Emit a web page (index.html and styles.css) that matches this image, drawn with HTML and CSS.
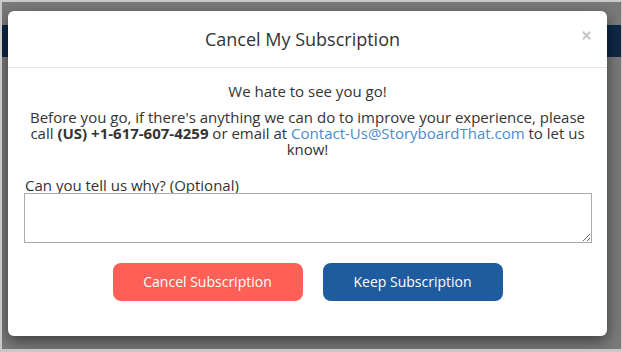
FILE: index.html
```html
<!DOCTYPE html>
<html>
<head>
<meta charset="utf-8">
<link rel="stylesheet" href="styles.css">
</head>
<body>
<div class="screen">
  <div class="page">
    <div class="page-top"></div>
    <div class="navbar"></div>
  </div>
  <div class="modal">
    <div class="modal-header">
      <h4 class="modal-title">Cancel My Subscription</h4>
      <button class="close" type="button" aria-label="Close">
        <svg width="9" height="9" viewBox="0 0 9 9"><path d="M0.8 0.8 L8.2 8.2 M8.2 0.8 L0.8 8.2" stroke="#c6c6c6" stroke-width="2" fill="none"/></svg>
      </button>
    </div>
    <div class="modal-body">
      <p class="lead">We hate to see you go!</p>
      <p class="info">Before you go, if there's anything we can do to improve your experience, please call <b>(US) +1-617-607-4259</b> or email at <a href="#">Contact-Us@StoryboardThat.com</a> to let us know!</p>
      <label class="why" for="why">Can you tell us why? (Optional)</label>
      <textarea id="why" class="why-box"></textarea>
      <div class="actions">
        <button class="btn btn-cancel" type="button">Cancel Subscription</button>
        <button class="btn btn-keep" type="button">Keep Subscription</button>
      </div>
    </div>
  </div>
</div>
</body>
</html>
```
FILE: styles.css
```css
* { box-sizing: border-box; }
html, body { margin: 0; padding: 0; }
body {
  width: 622px;
  height: 352px;
  overflow: hidden;
  font-family: "Open Sans", "Liberation Sans", sans-serif;
  color: #333;
}
.screen {
  position: relative;
  width: 622px;
  height: 352px;
  border-style: solid;
  border-color: #c9c9c9;
  border-width: 2px 1px 3px 2px;
  background: #7a7a7a;
  overflow: hidden;
}
.page { display: flex; flex-direction: column; }
.page-top { height: 23px; }
.navbar { height: 32px; background: #0d2846; }

.modal {
  position: absolute;
  left: 6px;
  top: 9px;
  width: 599px;
  height: 325px;
  background: #fff;
  border-radius: 6px;
  box-shadow: 0 5px 15px rgba(0,0,0,.5);
  display: flex;
  flex-direction: column;
}
.modal-header {
  position: relative;
  padding: 15px;
  border-bottom: 1px solid #e5e5e5;
}
.modal-title {
  margin: 0;
  font-size: 18px;
  font-weight: normal;
  line-height: 26px;
  text-align: center;
  color: #333;
  padding-right: 10px;
}
.close {
  position: absolute;
  right: 16px;
  top: 20px;
  padding: 0;
  border: 0;
  background: none;
  width: 9px;
  height: 9px;
  display: flex;
}
.modal-body {
  padding: 15px 15px 15px 15px;
  font-size: 15px;
  line-height: 16px;
  display: flex;
  flex-direction: column;
}
.lead {
  margin: 0;
  text-align: center;
}
.info {
  margin: 10px 0 0;
  text-align: center;
}
.info b { font-weight: bold; }
.info a { color: #4a8bd0; text-decoration: none; }
.why {
  margin-top: 21px;
  padding-left: 2px;
  line-height: 15px;
  display: block;
}
.why-box {
  display: block;
  margin-left: 1px;
  width: 568px;
  height: 50px;
  border: 1px solid #a9a9a9;
  font-family: inherit;
  font-size: 14px;
}
.actions {
  margin-top: 20px;
  display: flex;
  justify-content: center;
  gap: 20px;
}
.btn {
  height: 38px;
  border: 0;
  border-radius: 8px;
  color: #fff;
  font-family: "Open Sans", "Liberation Sans", sans-serif;
  font-size: 14px;
  line-height: 38px;
  padding: 0;
  white-space: nowrap;
  text-align: center;
}
.btn-cancel { background: #fe5f57; width: 190px; }
.btn-keep { background: #1f5b9f; width: 180px; }
```
